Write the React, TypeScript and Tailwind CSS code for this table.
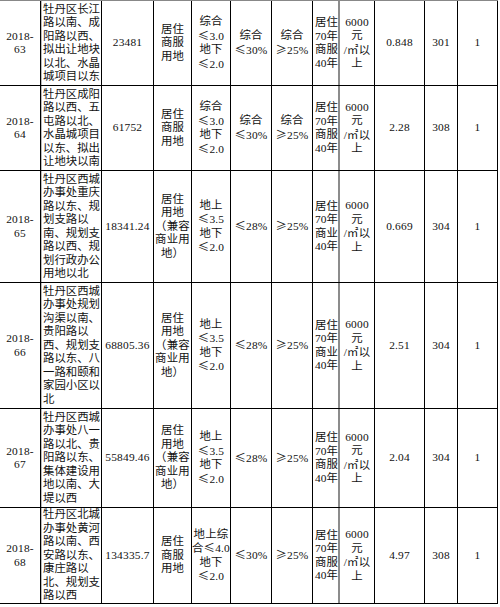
import React from "react";

type Row = {
  h: string;
  id: string[];
  addr: string[];
  area: string;
  use: string[];
  far: string[];
  dens: string[];
  green: string[];
  years: string[];
  x: string;
  y: string;
};

const useA = ["居住", "商服", "用地"];
const useB = ["居住", "用地", "（兼容", "商业用", "地）"];
const farB = ["地上", "≤3.5", "地下", "≤2.0"];

const rows: Row[] = [
  {
    h: "h-[85px]",
    id: ["2018-", "63"],
    addr: ["牡丹区长江", "路以南、成", "阳路以西、", "拟出让地块", "以北、水晶", "城项目以东"],
    area: "23481",
    use: useA,
    far: ["综合", "≤3.0", "地下", "≤2.0"],
    dens: ["综合", "≤30%"],
    green: ["综合", "≥25%"],
    years: ["居住", "70年", "商服", "40年"],
    x: "0.848",
    y: "301",
  },
  {
    h: "h-[85px]",
    id: ["2018-", "64"],
    addr: ["牡丹区成阳", "路以西、五", "屯路以北、", "水晶城项目", "以东、拟出", "让地块以南"],
    area: "61752",
    use: useA,
    far: ["综合", "≤3.0", "地下", "≤2.0"],
    dens: ["综合", "≤30%"],
    green: ["综合", "≥25%"],
    years: ["居住", "70年", "商服", "40年"],
    x: "2.28",
    y: "308",
  },
  {
    h: "h-[112px]",
    id: ["2018-", "65"],
    addr: ["牡丹区西城", "办事处重庆", "路以东、规", "划支路以", "南、规划支", "路以西、规", "划行政办公", "用地以北"],
    area: "18341.24",
    use: useB,
    far: farB,
    dens: ["≤28%"],
    green: ["≥25%"],
    years: ["居住", "70年", "商业", "40年"],
    x: "0.669",
    y: "304",
  },
  {
    h: "h-[126px]",
    id: ["2018-", "66"],
    addr: ["牡丹区西城", "办事处规划", "沟渠以南、", "贵阳路以", "西、规划支", "路以东、八", "一路和颐和", "家园小区以", "北"],
    area: "68805.36",
    use: useB,
    far: farB,
    dens: ["≤28%"],
    green: ["≥25%"],
    years: ["居住", "70年", "商业", "40年"],
    x: "2.51",
    y: "304",
  },
  {
    h: "h-[99px]",
    id: ["2018-", "67"],
    addr: ["牡丹区西城", "办事处八一", "路以北、贵", "阳路以东、", "集体建设用", "地以南、大", "堤以西"],
    area: "55849.46",
    use: useB,
    far: farB,
    dens: ["≤28%"],
    green: ["≥25%"],
    years: ["居住", "70年", "商服", "40年"],
    x: "2.04",
    y: "304",
  },
  {
    h: "h-[96px]",
    id: ["2018-", "68"],
    addr: ["牡丹区北城", "办事处黄河", "路以南、西", "安路以东、", "康庄路以", "北、规划支", "路以西"],
    area: "134335.7",
    use: useA,
    far: ["地上综", "合≤4.0", "地下", "≤2.0"],
    dens: ["≤30%"],
    green: ["≥25%"],
    years: ["居住", "70年", "商服", "40年"],
    x: "4.97",
    y: "308",
  },
];

function Txt({ s }: { s: string }) {
  const parts = s.split(/([≤≥㎡])/);
  return (
    <>
      {parts.map((p, i) =>
        p === "≤" || p === "≥" || p === "㎡" ? (
          <span key={i} className="font-['Noto_Sans_CJK_SC']">
            {p}
          </span>
        ) : (
          <span key={i}>{p}</span>
        )
      )}
    </>
  );
}

function Lines({ lines }: { lines: string[] }) {
  return (
    <>
      {lines.map((l, i) => (
        <div key={i} className="whitespace-nowrap">
          <Txt s={l} />
        </div>
      ))}
    </>
  );
}

const cell =
  "flex flex-col justify-center items-center text-center border-r border-black overflow-visible";

export default function App() {
  return (
    <div className="w-[500px] h-[607px] bg-white overflow-hidden text-[#111] text-[11.4px] leading-[13.5px] tracking-[0.2px] font-['Liberation_Serif','Noto_Sans_CJK_SC',serif]">
      <div className="w-[498px] border-t border-[#888]">
        {rows.map((r, i) => (
          <div
            key={i}
            className={`grid grid-cols-[41px_61px_52px_38px_39px_41px_41px_27px_35px_50px_33px_40px] border-b border-black ${r.h}`}
          >
            <div className={cell}>
              <Lines lines={r.id} />
            </div>
            <div className="flex flex-col justify-center items-start text-left border-r border-black pl-[2px] tracking-normal shadow-[inset_1px_0_0_#bbb] overflow-visible">
              <Lines lines={r.addr} />
            </div>
            <div className={cell}>
              <Lines lines={[r.area]} />
            </div>
            <div className={cell}>
              <Lines lines={r.use} />
            </div>
            <div className={cell}>
              <Lines lines={r.far} />
            </div>
            <div className={cell}>
              <Lines lines={r.dens} />
            </div>
            <div className={cell}>
              <Lines lines={r.green} />
            </div>
            <div className="flex flex-col justify-center items-start text-left border-r-2 border-[#8c8c8c] pl-[2px] tracking-normal overflow-visible">
              <Lines lines={r.years} />
            </div>
            <div className={cell}>
              <Lines lines={["6000", "元", "/㎡以", "上"]} />
            </div>
            <div className={cell}>
              <Lines lines={[r.x]} />
            </div>
            <div className={cell}>
              <Lines lines={[r.y]} />
            </div>
            <div className={cell}>
              <Lines lines={["1"]} />
            </div>
          </div>
        ))}
      </div>
    </div>
  );
}
